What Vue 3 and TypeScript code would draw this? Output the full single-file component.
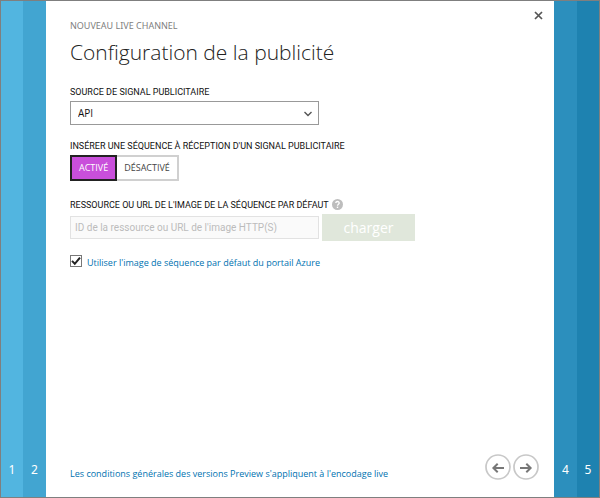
<script setup lang="ts">
import { ref } from 'vue'

const source = ref('API')
const inserted = ref(true)
const useDefault = ref(true)
const slateUrl = ref('')
</script>

<template>
  <div class="wizard">
    <nav class="rail" aria-label="Étapes précédentes">
      <button type="button" class="step s1">1</button>
      <button type="button" class="step s2">2</button>
    </nav>

    <main class="panel">
      <button type="button" class="close" aria-label="Fermer">
        <svg width="9" height="9" viewBox="0 0 9 9"><path d="M1 1L8 8M8 1L1 8" stroke="#555" stroke-width="1.7" fill="none" /></svg>
      </button>

      <header>
        <p class="eyebrow">NOUVEAU LIVE CHANNEL</p>
        <h1>Configuration de la publicité</h1>
      </header>

      <form class="form" @submit.prevent>
        <div class="field">
          <label class="label" for="source">SOURCE DE SIGNAL PUBLICITAIRE</label>
          <div class="select">
            <select id="source" v-model="source">
              <option>API</option>
            </select>
            <svg class="chevron" width="8" height="6" viewBox="0 0 8 6"><path d="M0.5 1L4 4.5L7.5 1" stroke="#555" stroke-width="1.4" fill="none" /></svg>
          </div>
        </div>

        <div class="field">
          <span id="insert-label" class="label">INSÉRER UNE SÉQUENCE À RÉCEPTION D'UN SIGNAL PUBLICITAIRE</span>
          <div class="toggle" role="group" aria-labelledby="insert-label">
            <button type="button" :class="{ on: inserted }" :aria-pressed="inserted" @click="inserted = true">ACTIVÉ</button>
            <button type="button" :class="{ on: !inserted }" :aria-pressed="!inserted" @click="inserted = false">DÉSACTIVÉ</button>
          </div>
        </div>

        <div class="field slate">
          <div class="label-row">
            <label class="label" for="slate">RESSOURCE OU URL DE L'IMAGE DE LA SÉQUENCE PAR DÉFAUT</label>
            <svg width="11" height="11" viewBox="0 0 11 11">
              <circle cx="5.5" cy="5.5" r="5.5" fill="#bdbdbd" />
              <path d="M3.8 4.1C3.8 1.9 7.3 2 7.2 4.1C7.1 5.3 5.6 5.2 5.5 6.7" stroke="#fff" stroke-width="1.3" fill="none" />
              <rect x="4.8" y="7.6" width="1.4" height="1.4" fill="#fff" />
            </svg>
          </div>
          <div class="upload">
            <input id="slate" v-model="slateUrl" type="text" :disabled="useDefault" placeholder="ID de la ressource ou URL de l'image HTTP(S)" />
            <button type="button" :disabled="useDefault">charger</button>
          </div>
        </div>

        <label class="check">
          <input v-model="useDefault" type="checkbox" />
          <span class="box">
            <svg v-if="useDefault" width="10" height="10" viewBox="0 0 9 9"><path d="M0.9 4.4L3.4 7L8.1 1.4" stroke="#222" stroke-width="1.8" fill="none" /></svg>
          </span>
          <span class="check-text">Utiliser l'image de séquence par défaut du portail Azure</span>
        </label>
      </form>

      <footer>
        <a href="#">Les conditions générales des versions Preview s'appliquent à l'encodage live</a>
        <div class="arrows">
          <button type="button" aria-label="Précédent">
            <svg width="26" height="26" viewBox="0 0 26 26">
              <circle cx="13" cy="13" r="12" stroke="#c8c8c8" stroke-width="1.7" fill="#fff" />
              <path d="M19 14H8.5M12.7 9.8L8.4 14L12.7 18.2" stroke="#777" stroke-width="2" fill="none" />
            </svg>
          </button>
          <button type="button" aria-label="Suivant">
            <svg width="26" height="26" viewBox="0 0 26 26">
              <circle cx="13" cy="13" r="12" stroke="#c8c8c8" stroke-width="1.7" fill="#fff" />
              <path d="M7 14H17.5M13.3 9.8L17.6 14L13.3 18.2" stroke="#777" stroke-width="2" fill="none" />
            </svg>
          </button>
        </div>
      </footer>
    </main>

    <nav class="rail" aria-label="Étapes suivantes">
      <button type="button" class="step s4">4</button>
      <button type="button" class="step s5">5</button>
    </nav>
  </div>
</template>

<style scoped>
.wizard {
  box-sizing: border-box;
  display: flex;
  min-height: 100vh;
  border: 1px solid #7f7f7f;
  background: #fff;
  color: #111;
  font-family: "Open Sans", sans-serif;
  font-size: 9px;
  line-height: 12px;
}
button,
input,
select {
  box-sizing: border-box;
  margin: 0;
  padding: 0;
  border: 0;
  border-radius: 0;
  font: inherit;
}
svg {
  display: block;
}
.rail {
  display: flex;
  flex: none;
}
.step {
  display: flex;
  align-items: flex-end;
  justify-content: center;
  width: 23px;
  padding-bottom: 19px;
  color: #fff;
  font-family: "Noto Sans", sans-serif;
  font-size: 12px;
  line-height: 16px;
}
.s1 { width: 22px; background: #52b5e0; }
.s2 { background: #42a5d1; }
.s4 { background: #2c8fbd; }
.s5 { width: 22px; background: #1e82b0; }
.panel {
  position: relative;
  display: flex;
  flex: 1;
  flex-direction: column;
  padding: 19px 15px 17px 24px;
}
.close {
  position: absolute;
  top: 10px;
  right: 11px;
  background: none;
}
.eyebrow {
  margin: 0;
  color: #808080;
  font-family: "Noto Sans", sans-serif;
}
.label {
  display: block;
  margin-bottom: 3px;
  font-family: Roboto, sans-serif;
}
h1 {
  margin: 4px 0 0;
  color: #222;
  font-size: 21px;
  font-weight: 300;
  line-height: 32px;
}
.form {
  display: flex;
  flex-direction: column;
  align-items: flex-start;
  padding-top: 18px;
}
.field {
  margin-bottom: 15px;
}
.slate {
  margin-bottom: 14px;
  padding-top: 3px;
}
.select {
  position: relative;
  width: 249px;
}
.select select {
  display: block;
  width: 100%;
  height: 24px;
  padding: 0 7px;
  border: 1px solid #999;
  appearance: none;
  background: #fff;
  color: #111;
  font-size: 10px;
}
.chevron {
  position: absolute;
  top: 10px;
  right: 7px;
  pointer-events: none;
}
.toggle {
  display: flex;
}
.toggle button {
  height: 26px;
  padding: 0 7px;
  border: 2px solid #d0d0d0;
  border-left: 0;
  background: #fff;
  color: #444;
}
.toggle .on {
  border: 2px solid #222;
  background: #c94fdb;
  color: #fff;
}
.label-row {
  display: flex;
  gap: 3px;
}
.upload {
  display: flex;
  align-items: center;
  gap: 3px;
}
.upload input {
  width: 249px;
  height: 23px;
  padding: 0 4px;
  border: 1px solid #e2e2e2;
  background: #fafafa;
}
.upload input::placeholder {
  color: #bcbcbc;
  font-family: Roboto, sans-serif;
  font-size: 10px;
  opacity: 1;
}
.upload button {
  width: 93px;
  height: 27px;
  background: #e0e7db;
  color: #fff;
  font-size: 14px;
}
.check {
  position: relative;
  display: flex;
  align-items: flex-start;
  gap: 5px;
  color: #0072b0;
}
.check input {
  position: absolute;
  width: 12px;
  height: 12px;
  opacity: 0;
}
.box {
  display: flex;
  width: 10px;
  height: 10px;
  border: 1px solid #777;
}
.check-text {
  padding-top: 2px;
}
footer {
  display: flex;
  align-items: center;
  justify-content: space-between;
  margin-top: auto;
}
footer a {
  padding-top: 13px;
  color: #0072b0;
  text-decoration: none;
}
.arrows {
  display: flex;
  gap: 2px;
}
.arrows button {
  background: none;
}
</style>

<style>
body {
  margin: 0;
}
</style>
